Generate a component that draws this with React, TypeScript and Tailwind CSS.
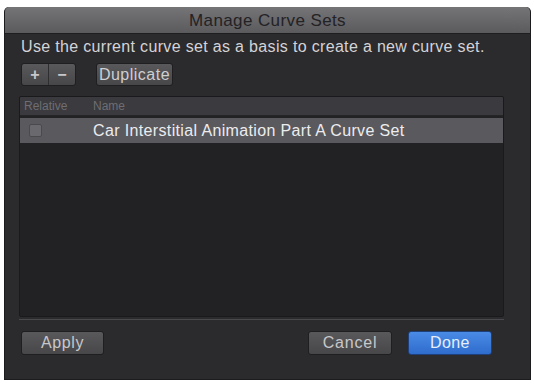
import React from "react";

export default function App() {
    return (
        <div className="w-[534px] h-[384px] bg-white pl-[4px] pt-[7px]" style={{fontFamily: '"Liberation Sans", Arial, sans-serif'}}>
            <div className="w-[527px] h-[373px] flex flex-col bg-[#2b2a2d] rounded-t-[5px] overflow-hidden border-x border-b border-[#1c1b1d]">
                <div className="h-[27px] shrink-0 flex items-center justify-center bg-gradient-to-b from-[#757477] to-[#5b5a5d] border-b border-[#1e1d20]">
                    <span className="text-[17px] tracking-[0.4px] text-[#232225] leading-none">Manage Curve Sets</span>
                </div>
                <div className="flex-1 flex flex-col pl-[14px] pr-[28px]">
                    <p className="mt-[3px] ml-[2px] text-[16px] tracking-[0.33px] leading-[20px] text-[#d4d3d6]">
                        Use the current curve set as a basis to create a new curve set.
                    </p>
                    <div className="flex items-center gap-[20px] mt-[6px] ml-[2px]">
                        <div className="flex h-[23px] w-[55px] rounded-[3px] border border-[#1f1e21] bg-gradient-to-b from-[#59585b] to-[#474649] overflow-hidden">
                            <div className="flex-1 flex items-center justify-center text-[#c8c7ca] text-[16px] font-bold border-r border-[#2e2d30]">+</div>
                            <div className="flex-1 flex items-center justify-center text-[#c8c7ca] text-[16px] font-bold">−</div>
                        </div>
                        <div className="h-[23px] w-[77px] flex items-center justify-center rounded-[3px] border border-[#1f1e21] bg-gradient-to-b from-[#59585b] to-[#474649] text-[16px] tracking-[0.5px] text-[#cfced1]">
                            Duplicate
                        </div>
                    </div>
                    <div className="mt-[10px] h-[221px] w-[485px] flex flex-col bg-[#222124] border border-[#1a191c] rounded-[2px] overflow-hidden">
                        <div className="h-[19px] shrink-0 flex items-center bg-[#3b3a3e] border-b border-[#252427] text-[12px] text-[#6e6d71]">
                            <span className="w-[73px] pl-[4px]">Relative</span>
                            <span>Name</span>
                        </div>
                        <div className="mt-[2px] h-[25px] shrink-0 flex items-center bg-[#5a595d]">
                            <div className="w-[73px] pl-[9px]">
                                <div className="w-[13px] h-[13px] rounded-[2px] bg-[#6a696d] border border-[#4a494c]"></div>
                            </div>
                            <span className="text-[16px] tracking-[0.36px] text-[#ececee]">Car Interstitial Animation Part A Curve Set</span>
                        </div>
                    </div>
                    <div className="mt-[2px] w-[485px] h-[1px] bg-[#4a494d]"></div>
                    <div className="mt-[11px] w-[473px] flex items-center">
                        <div className="ml-[2px] h-[24px] w-[83px] flex items-center justify-center rounded-[3px] border border-[#1f1e21] bg-gradient-to-b from-[#59585b] to-[#474649] text-[16px] tracking-[0.6px] text-[#c8c7ca]">
                            Apply
                        </div>
                        <div className="ml-auto h-[24px] w-[84px] flex items-center justify-center rounded-[3px] border border-[#1f1e21] bg-gradient-to-b from-[#59585b] to-[#474649] text-[16px] tracking-[0.8px] text-[#c8c7ca]">
                            Cancel
                        </div>
                        <div className="ml-[16px] h-[24px] w-[84px] flex items-center justify-center rounded-[3px] border border-[#1d3f7a] bg-gradient-to-b from-[#4a8be6] to-[#2f6ccc] text-[16px] tracking-[0.4px] text-[#e6eefa]">
                            Done
                        </div>
                    </div>
                </div>
            </div>
        </div>
    );
}
